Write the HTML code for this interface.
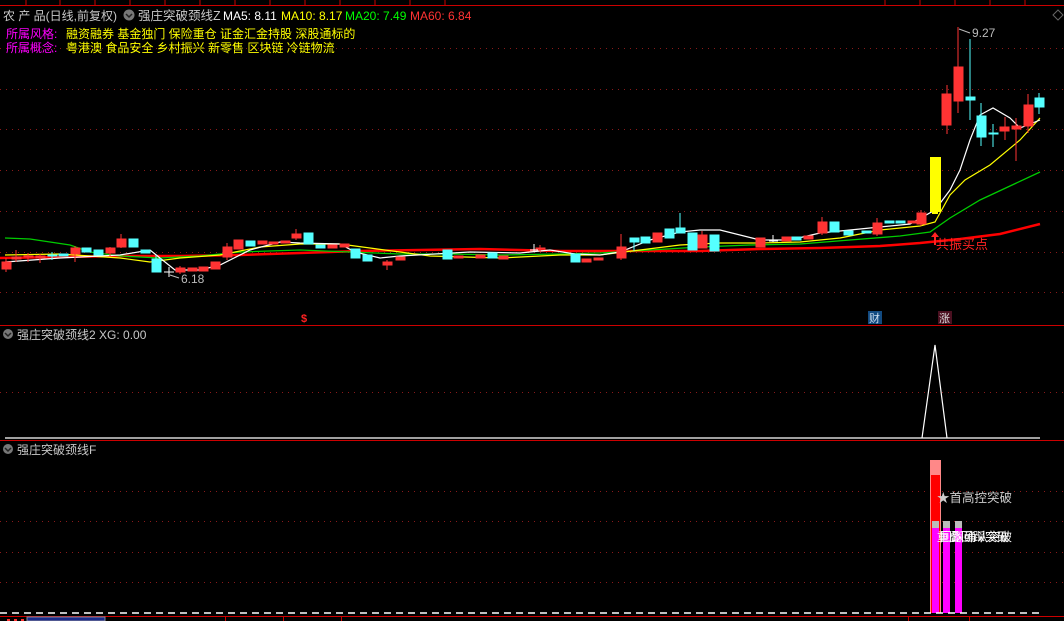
<!DOCTYPE html>
<html><head><meta charset="utf-8"><style>
html,body{margin:0;padding:0;background:#000;width:1064px;height:621px;overflow:hidden}
svg{display:block}
text{font-family:"Liberation Sans","Noto Sans CJK SC",sans-serif}
</style></head><body>
<svg width="1064" height="621" viewBox="0 0 1064 621" xmlns="http://www.w3.org/2000/svg">
<rect width="1064" height="621" fill="#000"/>
<line x1="0" y1="5.5" x2="1064" y2="5.5" stroke="#c00" stroke-width="1"/>
<g stroke="#c00"><line x1="26" y1="0" x2="26" y2="5"/><line x1="60" y1="0" x2="60" y2="5"/><line x1="95" y1="0" x2="95" y2="5"/><line x1="130" y1="0" x2="130" y2="5"/><line x1="165" y1="0" x2="165" y2="5"/><line x1="200" y1="0" x2="200" y2="5"/><line x1="235" y1="0" x2="235" y2="5"/><line x1="270" y1="0" x2="270" y2="5"/><line x1="305" y1="0" x2="305" y2="5"/><line x1="340" y1="0" x2="340" y2="5"/><line x1="375" y1="0" x2="375" y2="5"/><line x1="410" y1="0" x2="410" y2="5"/><line x1="445" y1="0" x2="445" y2="5"/><line x1="885" y1="0" x2="885" y2="5"/><line x1="920" y1="0" x2="920" y2="5"/><line x1="955" y1="0" x2="955" y2="5"/><line x1="990" y1="0" x2="990" y2="5"/><line x1="1025" y1="0" x2="1025" y2="5"/></g>
<g stroke="#8a1a1a" stroke-dasharray="1,5">
<line x1="0" y1="48.5" x2="1064" y2="48.5"/><line x1="0" y1="89.5" x2="1064" y2="89.5"/><line x1="0" y1="129.5" x2="1064" y2="129.5"/><line x1="0" y1="170.5" x2="1064" y2="170.5"/><line x1="0" y1="211.5" x2="1064" y2="211.5"/><line x1="0" y1="252.5" x2="1064" y2="252.5"/><line x1="0" y1="292.5" x2="1064" y2="292.5"/>
<line x1="0" y1="392.5" x2="1064" y2="392.5"/>
<line x1="0" y1="491.5" x2="1064" y2="491.5"/><line x1="0" y1="521.5" x2="1064" y2="521.5"/><line x1="0" y1="552.5" x2="1064" y2="552.5"/><line x1="0" y1="582.5" x2="1064" y2="582.5"/>
</g>
<text x="3" y="20" font-size="12" fill="#c8c8c8">农 产 品(日线,前复权)</text>
<circle cx="129" cy="15" r="5.5" fill="#777"/><path d="M126 14 l3 3 l3 -3" stroke="#222" stroke-width="1.5" fill="none"/>
<text x="138" y="20" font-size="12.5" fill="#c8c8c8">强庄突破颈线Z</text>
<text x="223" y="20" font-size="12" fill="#fff">MA5: 8.11</text>
<text x="281" y="20" font-size="12" fill="#ff0">MA10: 8.17</text>
<text x="345" y="20" font-size="12" fill="#0f0">MA20: 7.49</text>
<text x="410" y="20" font-size="12" fill="#f33">MA60: 6.84</text>
<text x="6" y="38" font-size="12" fill="#f0f">所属风格:</text>
<text x="66" y="38" font-size="12" fill="#ff0">融资融券 基金独门 保险重仓 证金汇金持股 深股通标的</text>
<text x="6" y="52" font-size="12" fill="#f0f">所属概念:</text>
<text x="66" y="52" font-size="12" fill="#ff0">粤港澳 食品安全 乡村振兴 新零售 区块链 冷链物流</text>
<path d="M1053 15 l5 -5 l5 5 l-5 5z" stroke="#666" fill="none"/>
<polyline fill="none" stroke="#f00" stroke-width="2.5" points="0,258 60,257 120,256 180,256 240,255 300,253 360,251 420,250 480,249 560,251 620,251 700,251 760,249 820,248 880,246 920,243 960,239 1000,234 1040,224"/>
<polyline fill="none" stroke="#0c0" stroke-width="1.3" points="5,238 30,239 50,242 70,245 90,252 120,256 160,258 200,256 240,252 300,250 350,252 400,254 450,254 500,255 560,254 600,253 650,250 700,247 750,245 800,244 850,240 900,236 930,232 950,218 980,200 1010,186 1040,172"/>
<polyline fill="none" stroke="#ff0" stroke-width="1.2" points="5,255 60,254 120,258 150,262 180,258 220,255 260,247 300,244 340,244 370,248 400,252 430,256 500,258 560,255 600,255 640,250 680,245 720,243 760,243 800,242 840,238 880,230 920,226 935,222 950,195 965,180 990,165 1020,140 1040,118"/>
<polyline fill="none" stroke="#fff" stroke-width="1.2" points="5,262 60,258 120,255 150,250 175,270 200,270 220,265 250,250 280,242 300,243 340,244 355,252 380,258 400,256 470,252 520,253 550,250 575,254 600,255 620,252 650,240 680,232 700,230 720,230 760,240 790,240 820,233 860,229 910,224 935,210 950,190 960,170 970,140 980,115 993,108 1010,118 1020,128 1040,120"/>
<g stroke-width="1">
<g fill="#f33" stroke="#f33">
<line x1="6" y1="258" x2="6" y2="272"/><rect x="2" y="262" width="9" height="7"/>
<line x1="16" y1="250" x2="16" y2="262"/><rect x="12" y="257" width="9" height="2"/>
<line x1="28" y1="253" x2="28" y2="262"/><rect x="24" y="256" width="9" height="1"/>
<line x1="40" y1="254" x2="40" y2="263"/><rect x="36" y="256" width="9" height="2"/>
<line x1="75" y1="246" x2="75" y2="262"/><rect x="71" y="248" width="9" height="6"/>
<line x1="110" y1="247" x2="110" y2="256"/><rect x="106" y="248" width="9" height="5"/>
<line x1="121" y1="234" x2="121" y2="248"/><rect x="117" y="239" width="9" height="8"/>
<line x1="180" y1="266" x2="180" y2="274"/><rect x="176" y="268" width="9" height="4"/>
<rect x="188" y="268" width="9" height="3"/><rect x="199" y="267" width="9" height="4"/>
<rect x="211" y="262" width="9" height="7"/>
<line x1="227" y1="243" x2="227" y2="260"/><rect x="223" y="247" width="9" height="10"/>
<rect x="234" y="240" width="9" height="9"/><rect x="258" y="241" width="9" height="3"/>
<rect x="269" y="242" width="9" height="2"/><rect x="281" y="241" width="9" height="2"/>
<line x1="296" y1="229" x2="296" y2="240"/><rect x="292" y="234" width="9" height="4"/>
<rect x="328" y="245" width="9" height="3"/><rect x="340" y="244" width="9" height="3"/>
<line x1="387" y1="260" x2="387" y2="270"/><rect x="383" y="262" width="9" height="3"/>
<rect x="396" y="257" width="9" height="3"/>
<rect x="454" y="256" width="9" height="2"/><rect x="476" y="255" width="9" height="3"/>
<rect x="499" y="256" width="9" height="3"/>
<line x1="540" y1="245" x2="540" y2="252"/><rect x="536" y="248" width="9" height="1"/>
<rect x="582" y="259" width="9" height="3"/><rect x="594" y="258" width="9" height="2"/>
<line x1="621" y1="234" x2="621" y2="260"/><rect x="617" y="247" width="9" height="11"/>
<rect x="653" y="233" width="9" height="9"/>
<line x1="702" y1="231" x2="702" y2="248"/><rect x="698" y="235" width="9" height="13"/>
<rect x="756" y="238" width="9" height="9"/><rect x="782" y="237" width="9" height="4"/>
<rect x="804" y="236" width="9" height="3"/>
<line x1="822" y1="217" x2="822" y2="235"/><rect x="818" y="222" width="9" height="11"/>
<line x1="877" y1="218" x2="877" y2="236"/><rect x="873" y="223" width="9" height="11"/>
<rect x="908" y="221" width="9" height="2"/>
<line x1="921" y1="210" x2="921" y2="226"/><rect x="917" y="213" width="9" height="11"/>
<line x1="947" y1="85" x2="947" y2="134"/><rect x="942" y="94" width="9" height="31"/>
<line x1="958" y1="27" x2="958" y2="113"/><rect x="954" y="67" width="9" height="34"/>
<line x1="1005" y1="117" x2="1005" y2="140"/><rect x="1000" y="127" width="9" height="4"/>
<line x1="1016" y1="118" x2="1016" y2="161"/><rect x="1012" y="126" width="9" height="3"/>
<line x1="1028" y1="94" x2="1028" y2="133"/><rect x="1024" y="105" width="9" height="21"/>
</g>
<g fill="#5ff" stroke="#5ff">
<rect x="48" y="255" width="9" height="1"/><line x1="52" y1="252" x2="52" y2="260"/>
<rect x="59" y="254" width="9" height="2"/>
<rect x="82" y="248" width="9" height="4"/>
<rect x="94" y="250" width="9" height="5"/>
<rect x="129" y="239" width="9" height="8"/>
<rect x="141" y="250" width="9" height="3"/>
<line x1="156" y1="255" x2="156" y2="272"/><rect x="152" y="259" width="9" height="13"/>
<rect x="246" y="241" width="9" height="5"/>
<rect x="304" y="233" width="9" height="11"/>
<rect x="316" y="245" width="9" height="3"/>
<rect x="351" y="249" width="9" height="9"/>
<rect x="363" y="255" width="9" height="6"/>
<rect x="443" y="250" width="9" height="9"/>
<rect x="488" y="253" width="9" height="5"/>
<rect x="571" y="254" width="9" height="8"/>
<rect x="630" y="238" width="9" height="4"/><line x1="634" y1="238" x2="634" y2="251"/>
<rect x="641" y="237" width="9" height="6"/>
<rect x="665" y="229" width="9" height="9"/>
<line x1="680" y1="213" x2="680" y2="233"/><rect x="676" y="228" width="9" height="5"/>
<rect x="688" y="233" width="9" height="17"/>
<rect x="710" y="235" width="9" height="16"/>
<rect x="792" y="237" width="9" height="3"/>
<rect x="830" y="222" width="9" height="10"/>
<rect x="844" y="231" width="9" height="4"/>
<rect x="862" y="231" width="9" height="2"/>
<rect x="885" y="221" width="9" height="2"/>
<rect x="896" y="221" width="9" height="2"/>
<line x1="970" y1="39" x2="970" y2="120"/><rect x="966" y="97" width="9" height="3"/>
<line x1="981" y1="103" x2="981" y2="146"/><rect x="977" y="116" width="9" height="21"/>
<line x1="993" y1="124" x2="993" y2="147"/><rect x="989" y="133" width="9" height="1"/>
<line x1="1039" y1="93" x2="1039" y2="114"/><rect x="1035" y="98" width="9" height="9"/>
</g>
<g stroke="#fff"><line x1="164" y1="272" x2="174" y2="272"/><line x1="169" y1="267" x2="169" y2="277"/>
<line x1="512" y1="253" x2="520" y2="253"/><line x1="530" y1="250" x2="538" y2="250"/><line x1="534" y1="244" x2="534" y2="252"/><line x1="773" y1="235" x2="773" y2="242"/><line x1="769" y1="241" x2="778" y2="241"/></g>
</g>
<rect x="930" y="157" width="11" height="55" fill="#ff0"/><rect x="932" y="210" width="6" height="4" fill="#ff0"/>
<text x="181" y="283" font-size="12" fill="#bbb">6.18</text><path d="M170 275 l9 3" stroke="#bbb"/>
<text x="972" y="37" font-size="12" fill="#bbb">9.27</text><path d="M959 29 l11 4" stroke="#bbb"/>
<path d="M935 232 l-4 5 h3 v8 h2 v-8 h3z" fill="#f22"/>
<text x="936" y="249" font-size="13" fill="#f22">共振买点</text>
<text x="301" y="322" font-size="11" fill="#f22" font-weight="bold">$</text>
<rect x="868" y="311" width="14" height="13" fill="#124a80"/><text x="869" y="322" font-size="11" fill="#cde">财</text>
<rect x="938" y="311" width="14" height="13" fill="#4a1020"/><text x="939" y="322" font-size="11" fill="#ddd">涨</text>
<line x1="0" y1="325.5" x2="1064" y2="325.5" stroke="#c00"/>
<circle cx="8" cy="334" r="5" fill="#777"/><path d="M5 333 l3 3 l3 -3" stroke="#222" stroke-width="1.5" fill="none"/>
<text x="17" y="339" font-size="12" fill="#c8c8c8">强庄突破颈线2  XG: 0.00</text>
<polyline points="922,438 935,345 947,438" fill="none" stroke="#fff" stroke-width="1.2"/>
<line x1="5" y1="438" x2="1040" y2="438" stroke="#fff" stroke-width="1.2"/>
<line x1="0" y1="440.5" x2="1064" y2="440.5" stroke="#c00"/>
<circle cx="8" cy="449" r="5" fill="#777"/><path d="M5 448 l3 3 l3 -3" stroke="#222" stroke-width="1.5" fill="none"/>
<text x="17" y="454" font-size="12" fill="#c8c8c8">强庄突破颈线F</text>
<rect x="930" y="460" width="11" height="153" fill="#f88"/>
<rect x="931" y="475" width="9" height="138" fill="#f00"/>
<rect x="932" y="521" width="7" height="7" fill="#bbb"/><rect x="932" y="528" width="7" height="85" fill="#f0f"/>
<rect x="943" y="521" width="7" height="7" fill="#bbb"/><rect x="943" y="528" width="7" height="85" fill="#f0f"/>
<rect x="955" y="521" width="7" height="7" fill="#bbb"/><rect x="955" y="528" width="7" height="85" fill="#f0f"/>
<text x="937" y="502" font-size="12.5" fill="#ccc">★首高控突破</text>
<text x="937" y="541" font-size="12" fill="#fff">重叠回踩突破</text>
<text x="940" y="541" font-size="12" fill="#fff">回踩确认突破</text>
<line x1="0" y1="613" x2="1040" y2="613" stroke="#fff" stroke-width="1.5" stroke-dasharray="7,5"/>
<line x1="0" y1="616.5" x2="1064" y2="616.5" stroke="#c00"/>
<rect x="7" y="619" width="3" height="2" fill="#f33"/><rect x="14" y="619" width="3" height="2" fill="#f33"/><rect x="21" y="619" width="3" height="2" fill="#f33"/>
<rect x="27" y="617" width="78" height="4" fill="#1a2a8a" stroke="#889"/>
<line x1="225.5" y1="617" x2="225.5" y2="621" stroke="#c00"/>
<line x1="283.5" y1="617" x2="283.5" y2="621" stroke="#c00"/>
<line x1="341.5" y1="617" x2="341.5" y2="621" stroke="#c00"/>
<line x1="908.5" y1="617" x2="908.5" y2="621" stroke="#c00"/>
<line x1="969.5" y1="617" x2="969.5" y2="621" stroke="#c00"/>
</svg>
</body></html>
